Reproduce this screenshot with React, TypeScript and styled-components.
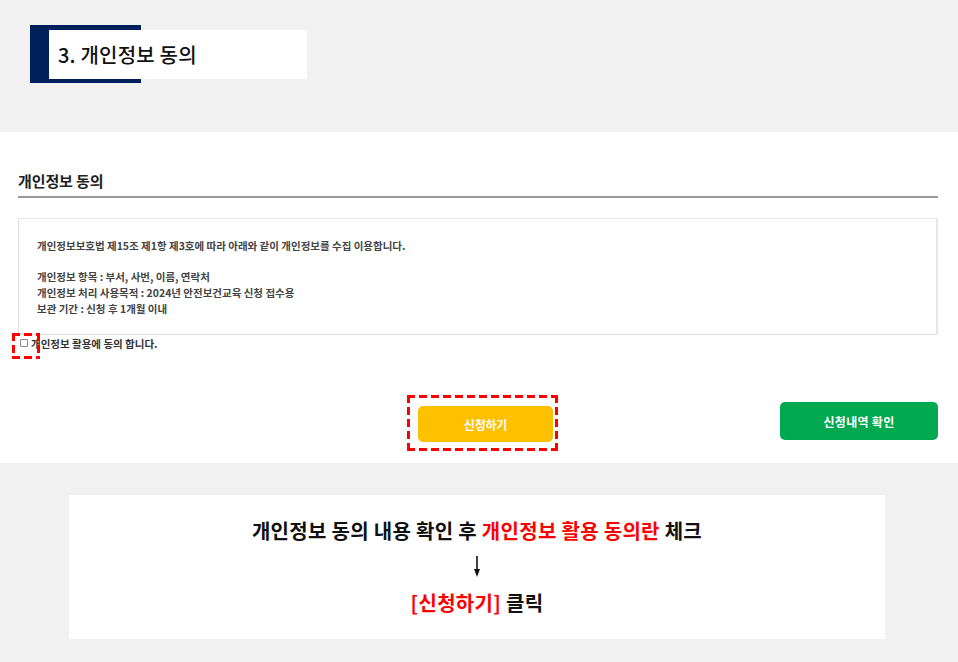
import React from 'react';
import styled, { createGlobalStyle, css } from 'styled-components';

const GlobalStyle = createGlobalStyle`
  html, body {
    margin: 0;
    padding: 0;
    background: #f1f1f1;
  }
  body {
    font-family: "Noto Sans CJK KR", "Noto Sans", sans-serif;
    color: #111;
  }
`;

// red dashed outline used for the "click here" marks
const dashed = css`
  background:
    repeating-linear-gradient(90deg, #ff0000 0 8px, transparent 8px 12px) top left / 100% 3px no-repeat,
    repeating-linear-gradient(90deg, #ff0000 0 8px, transparent 8px 12px) bottom left / 100% 3px no-repeat,
    repeating-linear-gradient(180deg, #ff0000 0 8px, transparent 8px 12px) top left / 3px 100% no-repeat,
    repeating-linear-gradient(180deg, #ff0000 0 8px, transparent 8px 12px) top right / 3px 100% no-repeat;
`;

const Page = styled.div`
  width: 958px;
  min-height: 662px;
  background: #f1f1f1;
`;

// --- step title ---
const TopBand = styled.div`
  padding: 25px 0 49px 30px;
`;

const TitleBadge = styled.div`
  width: 111px;
  height: 58px;
  box-sizing: border-box;
  padding: 5px 0 0 19px;
  background: #00205b;
`;

const TitleCard = styled.h2`
  margin: 0;
  width: 258px;
  height: 49px;
  padding-left: 9px;
  box-sizing: border-box;
  display: flex;
  align-items: center;
  background: #fff;
  font-size: 20px;
  font-weight: 500;
  letter-spacing: 0.2px;
  color: #111;
`;

// --- form section ---
const Section = styled.section`
  background: #fff;
  padding: 39px 20px 12px 18px;
`;

const Heading = styled.h3`
  margin: 0;
  padding-bottom: 5px;
  border-bottom: 2px solid #999;
  font-size: 15px;
  line-height: 20px;
  font-weight: 700;
  letter-spacing: -0.1px;
  color: #222;
`;

const TermsBox = styled.div`
  margin-top: 20px;
  padding: 19px 18px 17px 18px;
  border: 1px solid #dedede;
  border-top-color: #e8e8e8;
  border-right: 2px solid #e6e6e6;
`;

const TermsPara = styled.p<{ $gap?: number }>`
  margin: 0;
  margin-top: ${p => p.$gap ?? 0}px;
  font-size: 10.5px;
  line-height: 16px;
  font-weight: 700;
  color: #444;
`;

const AgreeRow = styled.label`
  display: flex;
  align-items: center;
  height: 16px;
  padding-left: 2px;
  font-size: 10.5px;
  font-weight: 700;
  color: #333;
`;

const CheckSpot = styled.span`
  position: relative;
  display: inline-flex;
  margin-right: 3px;
`;

const Check = styled.input`
  appearance: none;
  margin: 0;
  width: 8px;
  height: 8px;
  border: 1px solid #888;
  border-radius: 1px;
  box-sizing: border-box;
  background: #fff;
`;

const Highlight = styled.span`
  position: absolute;
  left: -8px;
  top: -6px;
  width: 28px;
  height: 26px;
  pointer-events: none;
  ${dashed}
`;

const ButtonRow = styled.div`
  display: flex;
  align-items: flex-start;
  margin-top: 44px;
  padding-left: 389px;
`;

const Marked = styled.div`
  padding: 11px 5px 9px 11px;
  ${dashed}
`;

const ActionButton = styled.button<{ $tone: 'yellow' | 'green' }>`
  border: 0;
  border-radius: 5px;
  color: #fff;
  font-family: inherit;
  font-size: 12px;
  font-weight: 700;
  letter-spacing: -0.2px;
  cursor: pointer;
  background: ${p => (p.$tone === 'yellow' ? '#ffc000' : '#00a84f')};
  width: ${p => (p.$tone === 'yellow' ? 135 : 158)}px;
  height: ${p => (p.$tone === 'yellow' ? 36 : 38)}px;
  ${p => p.$tone === 'green' && 'margin-left: auto; margin-top: 7px; letter-spacing: 0.3px;'}
`;

// --- guide note ---
const GuideBand = styled.div`
  padding: 32px 0 23px 69px;
`;

const GuideCard = styled.div`
  width: 816px;
  padding: 24px 0;
  background: #fff;
  display: flex;
  flex-direction: column;
  align-items: center;
`;

const GuideLine = styled.p<{ $gap?: number }>`
  margin: ${p => p.$gap ?? 0}px 0 0 0;
  font-size: 20px;
  line-height: 24px;
  font-weight: 700;
  letter-spacing: 0.3px;
  color: #111;
`;

const Red = styled.span`
  color: #ff0000;
`;

const ArrowIcon = styled.svg`
  display: block;
  margin-top: 13px;
`;

export default function App() {
  return (
    <Page>
      <GlobalStyle />
      <TopBand>
        <TitleBadge>
          <TitleCard>3. 개인정보 동의</TitleCard>
        </TitleBadge>
      </TopBand>

      <Section>
        <Heading>개인정보 동의</Heading>
        <TermsBox>
          <TermsPara>개인정보보호법 제15조 제1항 제3호에 따라 아래와 같이 개인정보를 수집 이용합니다.</TermsPara>
          <TermsPara $gap={15}>개인정보 항목 : 부서, 사번, 이름, 연락처</TermsPara>
          <TermsPara>개인정보 처리 사용목적 : 2024년 안전보건교육 신청 접수용</TermsPara>
          <TermsPara>보관 기간 : 신청 후 1개월 이내</TermsPara>
        </TermsBox>
        <AgreeRow>
          <CheckSpot>
            <Check type="checkbox" />
            <Highlight />
          </CheckSpot>
          개인정보 활용에 동의 합니다.
        </AgreeRow>

        <ButtonRow>
          <Marked>
            <ActionButton $tone="yellow">신청하기</ActionButton>
          </Marked>
          <ActionButton $tone="green">신청내역 확인</ActionButton>
        </ButtonRow>
      </Section>

      <GuideBand>
        <GuideCard>
          <GuideLine>
            개인정보 동의 내용 확인 후 <Red>개인정보 활용 동의란</Red> 체크
          </GuideLine>
          <ArrowIcon width="8" height="21" viewBox="0 0 8 21">
            <line x1="4" y1="0" x2="4" y2="15" stroke="#111" strokeWidth="1.6" />
            <polygon points="1,13 7,13 4,21" fill="#111" />
          </ArrowIcon>
          <GuideLine $gap={14}>
            <Red>[신청하기]</Red> 클릭
          </GuideLine>
        </GuideCard>
      </GuideBand>
    </Page>
  );
}
